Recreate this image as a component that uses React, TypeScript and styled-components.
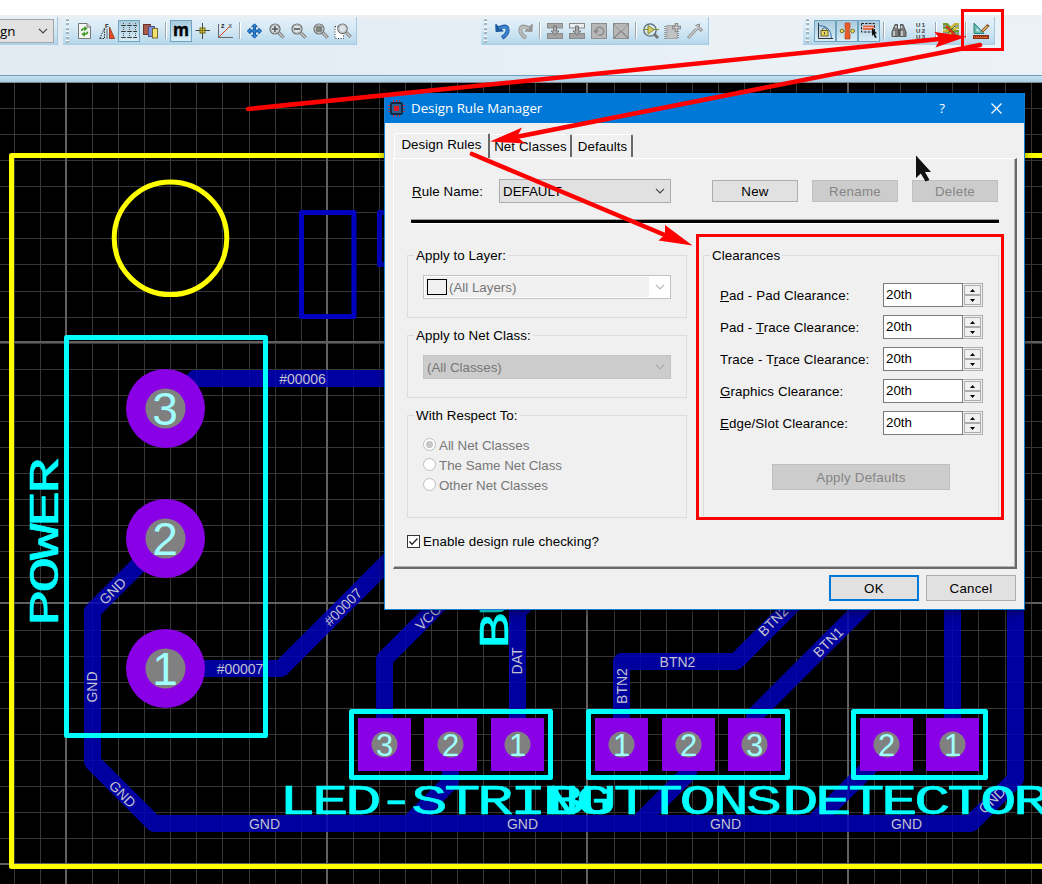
import React from "react";
import styled, { createGlobalStyle, css } from "styled-components";

const UI = '"Liberation Sans", Arial, sans-serif';
const SEGOE = '"Open Sans", "Noto Sans", sans-serif';

const Global = createGlobalStyle`
  *, *::before, *::after { box-sizing: border-box; }
  body { margin: 0; background: #fff; font-family: ${UI}; font-size: 13.33px; color: #000; }
  button, input { font-family: inherit; font-size: inherit; }
`;

/* ---------- application frame ---------- */

const Window = styled.div`
  position: relative;
  width: 1042px;
  height: 884px;
  overflow: hidden;
  display: flex;
  flex-direction: column;
  padding-top: 15px;
`;

const ToolArea = styled.header`
  height: 60px;
  flex: none;
  display: flex;
  align-items: flex-start;
  padding-top: 2px;
  background: linear-gradient(#efefef, #ebf0f4 3px, transparent 4px),
    linear-gradient(90deg, #e2eaf2, #e9f1f7 70%, #eaf2f8);
`;

const CanvasEdge = styled.div`
  height: 8px;
  flex: none;
  background: linear-gradient(#c8e0f0, #a9cfe6);
  border-top: 1px solid #6b9dbd;
  border-bottom: 1px solid #868686;
`;

const Strip = styled.div<{ $w: number; $gap?: number }>`
  width: ${(p) => p.$w}px;
  height: 28px;
  margin-right: ${(p) => p.$gap ?? 0}px;
  flex: none;
  display: flex;
  align-items: center;
  padding-bottom: 1px;
  background: linear-gradient(#e6f1f8, #d7eaf5 40%, #b9daed 90%, #a8cee3);
  border-right: 1px solid #a5c8dc;
`;

const Grip = styled.span`
  width: 3px;
  height: 25px;
  margin: 0 5px 0 3px;
  background: repeating-linear-gradient(#fff 0 1px, #a3b4c0 1px 3px, transparent 3px 4.5px);
`;

const Tool = styled.button<{ $on?: boolean }>`
  width: 22px;
  height: 22px;
  flex: none;
  display: grid;
  place-items: center;
  padding: 0;
  border: 1px solid transparent;
  background: none;
  ${(p) =>
    p.$on &&
    css`
      border: 1px solid #6fa3c0;
      background: linear-gradient(#a9cbdd, #d8ecf7);
    `}
`;

const Divider = styled.span`
  width: 2px;
  height: 17px;
  margin: 0 3px;
  background: linear-gradient(90deg, #a0a8ae 50%, #fff 50%);
`;

const TopCombo = styled.div`
  width: 54px;
  height: 24px;
  display: flex;
  align-items: center;
  justify-content: space-between;
  padding-right: 4px;
  font: 13.4px ${SEGOE};
  background: #e1e1e1;
  border: 1px solid #a5a5a5;
  border-left: 0;
`;

/* ---------- toolbar glyphs ---------- */

const Ico = ({ children }: { children: React.ReactNode }) => (
  <svg width="18" height="18" viewBox="-1 -1 18 18" overflow="visible">{children}</svg>
);

const Chevron = ({ color = "#444" }: { color?: string }) => (
  <svg width="12" height="8" viewBox="0 0 12 8">
    <path d="M2 1.8 L6 5.8 L10 1.8" fill="none" stroke={color} strokeWidth="1.2" />
  </svg>
);

const Lens = ({ children }: { children?: React.ReactNode }) => (
  <>
    <path d="M10 10 L14.6 14.6" stroke="#777" strokeWidth="3.2" />
    <path d="M10 10 L14.4 14.4" stroke="#ccc" strokeWidth="1.4" />
    <circle cx="6" cy="6" r="5" fill="#dce6ea" stroke="#6d6d6d" strokeWidth="1.2" />
    <circle cx="6" cy="6" r="4" fill="none" stroke="#b5b8ba" />
    {children}
  </>
);

const Refresh = () => (
  <Ico>
    <path d="M1.5 .5 H10 L13.5 4 V15.5 H1.5Z" fill="#f4f6f4" stroke="#777" />
    <path d="M10 .5 V4 H13.5" fill="#ddd" stroke="#777" />
    <path d="M4.6 8 Q4.8 5.6 8 5.6 M10.6 8.6 Q10.4 11.2 7 11.2" fill="none" stroke="#3e9a1c" strokeWidth="1.5" />
    <path d="M7.3 3 L10.6 5.6 L7.3 8.2Z M7.8 8.6 L4.4 11.2 L7.8 13.8Z" fill="#3e9a1c" />
  </Ico>
);
const Mirror = () => (
  <Ico>
    <path d="M.8 15.5 L5.5 5 V15.5Z" fill="none" stroke="#333" strokeDasharray="1.5 1" />
    <path d="M10.5 4 L15.5 15.5 H10.5Z" fill="#e8502a" stroke="#8f2a14" strokeWidth=".8" />
    <path d="M8 5.5 V16" stroke="#666" />
    <text x="6" y="4.6" fontFamily="Liberation Sans" fontSize="6" fontWeight="bold" fill="#222">F</text>
  </Ico>
);
const GridIcon = () => (
  <Ico>
    <path d="M2.5 0V16 M8.5 0V16 M14.5 0V16 M0 2.5H16 M0 8.5H16 M0 14.5H16" stroke="#555" strokeDasharray="1 1" />
    <path d="M1 2.5h3M7 2.5h3M13 2.5h3M1 8.5h3M7 8.5h3M13 8.5h3M1 14.5h3M7 14.5h3M13 14.5h3" stroke="#333" />
  </Ico>
);
const Layers = () => (
  <Ico>
    <rect x=".5" y="1.5" width="7" height="10" fill="#a85b48" stroke="#6b3429" />
    <rect x="5.5" y="3.5" width="6" height="10" fill="#8593d8" stroke="#4b538c" />
    <rect x="9.5" y="5.5" width="5" height="9.5" fill="#f1e06a" stroke="#726a2b" />
  </Ico>
);
const Metric = () => (
  <Ico>
    <text x="8" y="13" textAnchor="middle" fontFamily="Open Sans" fontSize="18.4" fontWeight="bold" textLength="16" lengthAdjust="spacingAndGlyphs" stroke="#000" strokeWidth=".4">m</text>
  </Ico>
);
const Origin = () => (
  <Ico>
    <path d="M7.5 0V16 M.5 7.5H15" stroke="#444" />
    <rect x="5" y="5" width="5" height="5" fill="#d5c736" stroke="#6e6716" />
    <path d="M7.5 5V10 M5 7.5H10" stroke="#6e6716" strokeWidth=".8" />
  </Ico>
);
const Axis = () => (
  <Ico>
    <path d="M1.5 1V14.5 H16" fill="none" stroke="#666" />
    <path d="M2 14 L12 4" stroke="#e5391b" />
    <text x="4" y="4.6" fontFamily="Liberation Sans" fontSize="7" fontWeight="bold" fill="#333">z</text>
    <text x="11.5" y="4.6" fontFamily="Liberation Sans" fontSize="7" fill="#333">x</text>
  </Ico>
);
const Move = () => (
  <Ico>
    <path
      d="M7.5 .8 L10.3 3.7 H8.4 V7.1 H11.8 V5.2 L14.7 8 L11.8 10.8 V8.9 H8.4 V12.3 H10.3 L7.5 15.2 L4.7 12.3 H6.6 V8.9 H3.2 V10.8 L.3 8 L3.2 5.2 V7.1 H6.6 V3.7 H4.7Z"
      fill="#2f8de0" stroke="#1456a0"
    />
  </Ico>
);
const ZoomIn = () => <Ico><Lens><path d="M3 6H9 M6 3V9" stroke="#555" strokeWidth="1.6" /></Lens></Ico>;
const ZoomOut = () => <Ico><Lens><path d="M3 6H9" stroke="#555" strokeWidth="1.6" /></Lens></Ico>;
const ZoomAll = () => <Ico><Lens><rect x="3.8" y="3.8" width="4.4" height="4.4" fill="#87917d" stroke="#666" /></Lens></Ico>;
const ZoomArea = () => (
  <Ico>
    <rect x="0" y="3.5" width="8.5" height="12" fill="#fff" stroke="#333" strokeDasharray="1 1.5" />
    <g transform="translate(1.8,0) scale(.95)"><Lens /></g>
  </Ico>
);
const Undo = ({ color, edge }: { color: string; edge: string }) => (
  <>
    <path d="M4.5 5 Q12.6 1 12.6 7.4 Q12.4 11.5 7 14.8" fill="none" stroke={edge} strokeWidth="4" />
    <path d="M.8 1.2 L1 8.5 L8.2 8Z" fill={edge} stroke={edge} />
    <path d="M4 5.6 Q12.4 1.4 12.6 7.4 Q12.2 11.3 7.6 14.2" fill="none" stroke={color} strokeWidth="2.2" />
  </>
);
const Insert = ({ open }: { open?: boolean }) => (
  <Ico>
    <rect x=".5" y=".5" width="15" height="4.5" fill={open ? "#e8eef1" : "#a9a9a9"} stroke="#8a8a8a" />
    <rect x=".5" y="10.5" width="15" height="5" fill="#a3a3a3" stroke="#8a8a8a" />
    <path d="M6.5 3 H9.5 V8 H12 L8 12.3 L4 8 H6.5Z" fill="#a8a8a8" stroke="#777" />
  </Ico>
);
const Rotate = () => (
  <Ico>
    <rect x=".5" y=".5" width="15" height="15" fill="#b7b7b7" stroke="#8e8e8e" />
    <path d="M4.8 8 A4 4 0 1 1 7 11.8" fill="none" stroke="#868686" strokeWidth="1.2" />
    <path d="M2 7.5 H8 L5 11Z" fill="#868686" />
  </Ico>
);
const Remove = () => (
  <Ico>
    <rect x=".5" y=".5" width="15" height="15" fill="#b7b7b7" stroke="#8e8e8e" />
    <path d="M1 1 L15 15 M15 1 L1 15" stroke="#858585" strokeWidth="1.2" />
    <path d="M2 1.5 L8 7.3 L14 1.5" fill="none" stroke="#d5d5d5" />
  </Ico>
);
const Search = () => (
  <Ico>
    <path d="M10.5 10.5 L15 15" stroke="#777" strokeWidth="3" />
    <circle cx="7" cy="7" r="6.2" fill="#d4e8ee" stroke="#576a75" strokeWidth="1.3" />
    <path d="M0 6.5 H5 M11 6.5 H16" stroke="#918b28" />
    <path d="M5 2.5 V11 L11 6.6Z" fill="#d6d163" stroke="#8d872c" />
  </Ico>
);
const Package = () => (
  <Ico>
    <path d="M.5 3V16 M12.8 8V16" stroke="#888" strokeWidth="2.4" strokeDasharray="1 1" />
    <rect x="2" y="2.5" width="10" height="13" fill="#c2c2c2" stroke="#a5a5a5" />
    <path d="M11.5 0V9 M7 4.5H16" stroke="#858585" strokeWidth="3.4" />
    <path d="M11.5 .8V8.2 M7.8 4.5H15.2" stroke="#c8c8c8" strokeWidth="1.4" />
  </Ico>
);
const Hammer = () => (
  <Ico>
    <path d="M1 15 L9.5 6" stroke="#8e8e8e" strokeWidth="3" />
    <path d="M1.5 14.5 L9.5 6" stroke="#cfcfcf" strokeWidth="1.2" />
    <path d="M8.5 2.5 L12.5 1 L12 4 L15.5 6.5 L14 8.5 L10 5.5" fill="#c4c4c4" stroke="#888" />
  </Ico>
);
const Lock = () => (
  <Ico>
    <path d="M1.5 0V15.5 H16" fill="none" stroke="#333" />
    <path d="M1.5 2.5 Q14 2.5 14.5 15" fill="none" stroke="#3a6cad" />
    <path d="M5.5 7.5 V5.8 Q7.5 3.4 9.5 5.8 V7.5" fill="none" stroke="#666" />
    <rect x="4" y="7.5" width="7" height="5.5" fill="#e5d460" stroke="#6f6620" />
    <path d="M7.5 9V11.5" stroke="#555" />
  </Ico>
);
const Necking = () => (
  <Ico>
    <path d="M6 0H11V5L10 8L11 11V16H6V11L7 8L6 5Z" fill="#e95b2b" stroke="#b8431c" strokeWidth=".7" />
    <path d="M1 8H6 M11 8H16" stroke="#444" />
    <circle cx="3" cy="8" r="1.8" fill="#f2e45a" stroke="#777023" />
    <circle cx="13.5" cy="8" r="1.8" fill="#f2e45a" stroke="#777023" />
  </Ico>
);
const Marquee = () => (
  <Ico>
    <rect x=".5" y=".5" width="13" height="8.5" fill="none" stroke="#222" strokeDasharray="2.5 1.2" />
    <rect x="2" y="2.5" width="11" height="4.5" fill="#e4694a" />
    <path d="M2 4.5H13" stroke="#f5b7a5" />
    <path d="M11 5 L16 10.5 L13.8 10.7 L15.8 14.3 L14 15 L12.4 11.5 L11 13Z" fill="#111" />
  </Ico>
);
const Binoculars = () => (
  <Ico>
    <path d="M4 1.5H6.5V5L7.5 7V13.5H1V9Z M12 1.5H9.5V5L8.5 7V13.5H15V9Z" fill="#7c7c7c" stroke="#555" />
    <path d="M3 8 V13 M11 8 V13 M5 3V5 M10.5 3V5" stroke="#d8d8d8" strokeWidth="1.5" />
    <path d="M6.5 7H9.5" stroke="#555" strokeWidth="1.6" />
  </Ico>
);
const Annotate = () => (
  <Ico>
    <g fontFamily="Liberation Sans" fontSize="6" fontWeight="bold" fill="#333">
      <text x="3" y="4.4" textLength="9">U1</text>
      <text x="3" y="10.1" textLength="9">U2</text>
      <text x="3" y="15.8" textLength="9">U3</text>
    </g>
  </Ico>
);
const Netlist = () => (
  <Ico>
    <path d="M0 1H4L11 8H16 M0 5H3L10 12H16" fill="none" stroke="#6c9b29" strokeWidth="2" />
    <path d="M16 1H12L4 8H0 M16 5H13L5 12H0" fill="none" stroke="#c9b32a" strokeWidth="2" />
    <path d="M0 3H4L12 10H16 M16 3H12L5 10H0" fill="none" stroke="#2f4c14" strokeWidth=".9" />
    <path d="M3 3L14 14" stroke="#d52f1c" strokeWidth="2" />
  </Ico>
);
const Rules = () => (
  <Ico>
    <path d="M1 0V10.5H11Z" fill="#62bcb0" stroke="#33827a" />
    <path d="M3.5 5V8.3H7Z" fill="#dceff4" />
    <path d="M9 8.5L15.5 2" stroke="#7b4419" strokeWidth="3" />
    <path d="M9.5 8L14.5 3" stroke="#e8bb6d" strokeWidth="1.4" />
    <rect x=".5" y="12.5" width="15" height="3" fill="#dd5a2d" stroke="#8c3013" />
    <path d="M2 13.5H15" stroke="#6d2813" strokeDasharray="1 1" />
  </Ico>
);

/* ---------- board drawing ---------- */

const Canvas = styled.svg`
  display: block;
  flex: none;
  background: #000;
`;

const range = (n: number) => Array.from({ length: n }, (_, i) => i);

const netLabels: [string, number, number, number][] = [
  ["#00006", 302.5, 379, 0],
  ["#00007", 240, 669, 0],
  ["#00007", 343, 607, -45],
  ["GND", 112.5, 591, -45],
  ["GND", 92, 687, -90],
  ["GND", 122.5, 794, 45],
  ["GND", 264.5, 824, 0],
  ["GND", 522.5, 824, 0],
  ["GND", 725.5, 824, 0],
  ["GND", 906.5, 824, 0],
  ["GND", 992, 800, -45],
  ["VCC/", 429.5, 616, -45],
  ["DAT", 517, 661, -90],
  ["BTN2", 621.5, 686, -90],
  ["BTN2", 677.5, 662, 0],
  ["BTN2", 773, 621, -45],
  ["BTN1", 828, 642, -45],
];

const tracks = [
  "165,408.5 195,378.5 420,378.5",
  "165,538.5 92.5,611 92.5,762 154,823.5 971,823.5 1015.5,779 1015.5,590",
  "165,668.5 281,668.5 400,549.5",
  "384.5,745 384.5,659 450,593.5",
  "517.5,745 517.5,600",
  "517.5,612 545,584.5",
  "621.5,745 621.5,661.5 736,661.5 805,592.5",
  "754.5,745 754.5,715.5 880,590",
  "952.5,745 952.5,590",
  "450.5,745 450.5,782 409,823.5",
  "688.5,745 688.5,773 638,823.5",
  "886.5,745 886.5,750 813,823.5",
];

const squarePads: [number, string][] = [
  [384.5, "3"], [450.5, "2"], [517.5, "1"],
  [621.5, "1"], [688.5, "2"], [754.5, "3"],
  [886.5, "2"], [952.5, "1"],
];

const Silk = ({ x, y, r = 0, children }: { x: number; y: number; r?: number; children: string }) => (
  <text
    transform={`translate(${x},${y}) rotate(${r}) scale(1.45,1)`}
    fontFamily="Liberation Mono" fontSize="42" letterSpacing="-2.45"
    fill="#0ff" stroke="#0ff" strokeWidth=".7" strokeLinejoin="round" vectorEffect="non-scaling-stroke"
  >
    {children}
  </text>
);

const Board = () => (
  <Canvas width="1042" height="801" viewBox="0 83 1042 801">
    <g stroke="#373737" shapeRendering="crispEdges">
      {range(40).map((i) => <path key={i} d={`M${Math.round(13.9 + i * 26.07) + 0.5} 83V884`} />)}
      {range(31).map((i) => <path key={i} d={`M0 ${Math.round(81.9 + i * 26.08) + 0.5}H1042`} />)}
    </g>
    <g stroke="#606060" strokeWidth="2" shapeRendering="crispEdges">
      {[66, 327, 587, 848].map((x) => <path key={x} d={`M${x} 83V884`} />)}
      {[342, 603, 864].map((y) => <path key={y} d={`M0 ${y}H1042`} />)}
    </g>
    <g fill="none" stroke="#0000c0" strokeWidth="5" strokeLinejoin="round">
      <rect x="301.5" y="212.5" width="52.5" height="104" />
      <rect x="379.5" y="212.5" width="52" height="52" />
    </g>
    <g opacity=".83" fill="none" stroke="#0000c0" strokeWidth="17" strokeLinejoin="round">
      {tracks.map((t) => <polyline key={t} points={t} />)}
    </g>
    <g fontFamily="Liberation Sans" fontSize="14" fill="#c2c2d0" textAnchor="middle">
      {netLabels.map(([t, x, y, r]) => (
        <text key={`${t}${x}`} transform={`translate(${x},${y}) rotate(${r})`} y="5">{t}</text>
      ))}
      <text x="956" y="608">/</text>
    </g>
    <g fill="none" stroke="#ff0" strokeWidth="5" strokeLinejoin="round">
      <path d="M1050 155.5H11.5V866.5H1050" />
      <circle cx="170.5" cy="238.3" r="56.3" />
    </g>
    <g textAnchor="middle" fontFamily="Liberation Sans" fill="#a0ffff">
      {[["3", 408.5], ["2", 538.5], ["1", 668.5]].map(([n, y]) => (
        <g key={n}>
          <circle cx="165.5" cy={y} r="39.5" fill="#8a00e6" />
          <circle cx="165.5" cy={y} r="20" fill="#808080" />
          <text x="165" y={Number(y) + 16} fontSize="46">{n}</text>
        </g>
      ))}
      {squarePads.map(([x, n]) => (
        <g key={x}>
          <rect x={x - 26.5} y="718" width="53" height="53" fill="#8a00e6" />
          <circle cx={x} cy="744.5" r="13" fill="#808080" />
          <text x={x} y="755.5" fontSize="31">{n}</text>
        </g>
      ))}
    </g>
    <g fill="none" stroke="#0ff" strokeWidth="5" strokeLinejoin="round">
      <rect x="66.5" y="337.5" width="199" height="398" />
      <rect x="351.5" y="711.5" width="199" height="66" />
      <rect x="588.5" y="711.5" width="199" height="66" />
      <rect x="853.5" y="711.5" width="132" height="66" />
    </g>
    <Silk x={57.5} y={626} r={-90}>POWER</Silk>
    <Silk x={508} y={649} r={-90}>BU</Silk>
    <Silk x={279} y={813.5}>LED-STRING</Silk>
    <Silk x={547.5} y={813.5}>BUTTONS</Silk>
    <Silk x={782} y={813.5}>DETECTOR</Silk>
  </Canvas>
);

/* ---------- dialog ---------- */

const Dialog = styled.section`
  position: absolute;
  left: 384px;
  top: 93px;
  width: 641px;
  height: 517px;
  display: flex;
  flex-direction: column;
  background: #f0f0f0;
  border: 1px solid #1a80d0;
  border-top: 0;
  box-shadow: 0 2px 9px rgba(0, 0, 0, 0.45);
`;

const TitleBar = styled.div`
  height: 30px;
  flex: none;
  display: flex;
  align-items: center;
  padding: 0 21px 0 3px;
  color: #fff;
  background: #0078d7;
  font: 13.3px ${SEGOE};
`;

const TitleText = styled.span`
  margin-left: 6px;
  flex: 1;
`;

const Help = styled.span`
  margin-right: 45px;
`;

const Tabs = styled.div`
  height: 35px;
  flex: none;
  display: flex;
  align-items: flex-end;
  padding-left: 9px;
`;

const Tab = styled.div<{ $w: number; $active?: boolean }>`
  width: ${(p) => p.$w}px;
  height: ${(p) => (p.$active ? 26 : 23)}px;
  padding-top: ${(p) => (p.$active ? 3 : 4)}px;
  text-align: center;
  letter-spacing: 0.08px;
  line-height: 16px;
  white-space: nowrap;
  border-top: 1px solid #fff;
  border-left: 1px solid ${(p) => (p.$active ? "#fff" : "transparent")};
  border-right: 2px solid #696969;
  border-radius: 2px 2px 0 0;
  margin-bottom: ${(p) => (p.$active ? -1 : 1)}px;
  margin-right: ${(p) => (p.$active ? 0 : 1)}px;
  background: #f0f0f0;
`;

const Panel = styled.div`
  height: 411px;
  flex: none;
  margin: 0 7px 0 8px;
  padding: 20px 17px 0 13px;
  border: 1px solid #fff;
  border-right: 2px solid #696969;
  border-bottom: 2px solid #696969;
  box-shadow: inset -1px -1px #b5b5b5;
`;

const RuleRow = styled.div`
  display: flex;
  align-items: center;
  height: 24px;
  padding-left: 5px;
`;

const RuleLabel = styled.span`
  width: 87px;
  letter-spacing: 0.07px;
`;

const Spacer = styled.span`
  flex: 1;
`;

const Combo = styled.div<{ $kind?: "off" | "layer" }>`
  width: ${(p) => (p.$kind ? 248 : 172)}px;
  height: 24px;
  display: flex;
  align-items: center;
  justify-content: space-between;
  padding: 0 4px 0 3px;
  color: ${(p) => (p.$kind ? "#777" : "#000")};
  background: ${(p) => (p.$kind === "off" ? "#ccc" : p.$kind ? "linear-gradient(90deg, #f0f0f0 225px, #fff 225px)" : "#e1e1e1")};
  border: 1px solid ${(p) => (p.$kind ? "#c3c3c3" : "#adadad")};
  ${(p) => p.$kind === "layer" && "box-shadow: inset 0 0 0 1px #fff;"}
`;

const LayerName = styled.span`
  display: flex;
  align-items: center;
  gap: 2px;
`;

const Swatch = styled.span`
  width: 20px;
  height: 16px;
  border: 1px solid #000;
`;

const Button = styled.button<{ $w: number; $h?: number; $primary?: boolean }>`
  width: ${(p) => p.$w}px;
  height: ${(p) => p.$h ?? 22}px;
  padding: 0;
  letter-spacing: 0.25px;
  color: #000;
  background: #e1e1e1;
  border: ${(p) => (p.$primary ? "2px solid #0078d7" : "1px solid #adadad")};
  &:disabled {
    color: #858585;
    background: #ccc;
    border-color: #bfbfbf;
  }
`;

const ButtonRow = styled.div`
  display: flex;
  gap: 14px;
`;

const Rule = styled.hr`
  width: 588px;
  height: 5px;
  margin: 16px 0 0 4px;
  background: #000;
  border: 0;
  border-top: 1px solid #a0a0a0;
  border-bottom: 1px solid #fff;
`;

const Columns = styled.div`
  display: flex;
  justify-content: space-between;
  margin: 31px 0 0 0;
  width: 592px;
`;

const Column = styled.div`
  display: flex;
  flex-direction: column;
  gap: 17px;
`;

const Group = styled.div<{ $w: number; $h: number }>`
  width: ${(p) => p.$w}px;
  height: ${(p) => p.$h}px;
  padding: 0 15px;
  border: 1px solid #dcdcdc;
`;

const Legend = styled.div<{ $gap?: number }>`
  width: fit-content;
  height: 16px;
  line-height: 16px;
  margin: -8px 0 ${(p) => p.$gap ?? 11}px -9px;
  padding: 0 2px;
  letter-spacing: 0.07px;
  background: #f0f0f0;
`;

const Radio = styled.label`
  height: 20px;
  display: flex;
  align-items: center;
  gap: 3px;
  color: #777;
`;

const Dot = styled.span<{ $on?: boolean }>`
  width: 13px;
  height: 13px;
  margin-top: -1px;
  border: 1px solid #bdbdbd;
  border-radius: 50%;
  background: ${(p) => (p.$on ? "radial-gradient(circle, #c6c6c6 3.3px, #fff 4px)" : "#fff")};
`;

const Clearance = styled.div`
  height: 24px;
  margin-bottom: 8px;
  display: flex;
  align-items: center;
  margin-left: 1px;
`;

const ClearanceLabel = styled.span`
  width: 163px;
  letter-spacing: 0.1px;
`;

const Value = styled.span`
  width: 80px;
  height: 24px;
  padding-left: 2px;
  line-height: 21px;
  background: #fff;
  border: 1px solid #7a7a7a;
`;

const Spinner = styled.span`
  width: 20px;
  height: 24px;
  display: flex;
  flex-direction: column;
  padding: 1px;
  border: 1px solid #adadad;
  border-left: 0;
  background: #f0f0f0;
`;

const SpinHalf = styled.span`
  flex: 1;
  display: grid;
  place-items: center;
  border: 1px solid #adadad;
`;

const ApplyRow = styled.div`
  margin: 29px 0 0 53px;
`;

const CheckRow = styled.label`
  display: flex;
  align-items: center;
  gap: 3px;
  height: 16px;
  margin-top: 15px;
  letter-spacing: 0.07px;
`;

const Footer = styled.div`
  display: flex;
  justify-content: flex-end;
  gap: 7px;
  padding: 6px 8px 0 0;
`;

const Overlay = styled.svg`
  position: absolute;
  left: 0;
  top: 0;
  pointer-events: none;
`;

const SpinButtons = () => (
  <Spinner>
    <SpinHalf><svg width="5" height="3"><path d="M0 3L2.5 0L5 3Z" /></svg></SpinHalf>
    <SpinHalf><svg width="5" height="3"><path d="M0 0L2.5 3L5 0Z" /></svg></SpinHalf>
  </Spinner>
);

const clearances: [string, string, string][] = [
  ["", "P", "ad - Pad Clearance:"],
  ["Pad - ", "T", "race Clearance:"],
  ["Trace - T", "r", "ace Clearance:"],
  ["", "G", "raphics Clearance:"],
  ["", "E", "dge/Slot Clearance:"],
];

const RuleDialog = () => (
  <Dialog>
    <TitleBar>
      <svg width="17" height="17" viewBox="0 0 17 17">
        <path d="M5.5 0V17M8.5 0V17M11.5 0V17M0 5.5H17M0 8.5H17M0 11.5H17" stroke="#b52b43" />
        <rect x="3" y="3" width="11" height="11" rx="1" fill="#2a5f90" stroke="#17273b" strokeWidth="1.8" />
        <rect x="6" y="6" width="5" height="5" fill="#e01b28" />
      </svg>
      <TitleText>Design Rule Manager</TitleText>
      <Help>?</Help>
      <svg width="13" height="13" viewBox="0 0 13 13"><path d="M1.5 1.5L11.5 11.5M11.5 1.5L1.5 11.5" stroke="#fff" strokeWidth="1.2" /></svg>
    </TitleBar>
    <Tabs>
      <Tab $w={96} $active>Design Rules</Tab>
      <Tab $w={82}>Net Classes</Tab>
      <Tab $w={60}>Defaults</Tab>
    </Tabs>
    <Panel>
      <RuleRow>
        <RuleLabel><u>R</u>ule Name:</RuleLabel>
        <Combo>DEFAULT<Chevron /></Combo>
        <Spacer />
        <ButtonRow>
          <Button $w={86}>New</Button>
          <Button $w={86} disabled>Rename</Button>
          <Button $w={86} disabled>Delete</Button>
        </ButtonRow>
      </RuleRow>
      <Rule />
      <Columns>
        <Column>
          <Group $w={280} $h={63}>
            <Legend>Apply to Layer:</Legend>
            <Combo $kind="layer"><LayerName><Swatch />(All Layers)</LayerName><Chevron color="#b5b5b5" /></Combo>
          </Group>
          <Group $w={280} $h={63}>
            <Legend>Apply to Net Class:</Legend>
            <Combo $kind="off">(All Classes)<Chevron color="#aaa" /></Combo>
          </Group>
          <Group $w={280} $h={103}>
            <Legend>With Respect To:</Legend>
            <Radio><Dot $on />All Net Classes</Radio>
            <Radio><Dot />The Same Net Class</Radio>
            <Radio><Dot />Other Net Classes</Radio>
          </Group>
        </Column>
        <Group $w={296} $h={263}>
          <Legend $gap={19}>Clearances</Legend>
          {clearances.map(([a, u, b]) => (
            <Clearance key={a + u + b}>
              <ClearanceLabel>{a}<u>{u}</u>{b}</ClearanceLabel>
              <Value>20th</Value>
              <SpinButtons />
            </Clearance>
          ))}
          <ApplyRow><Button $w={178} $h={26} disabled>Apply Defaults</Button></ApplyRow>
        </Group>
      </Columns>
      <CheckRow>
        <svg width="13" height="13" viewBox="0 0 13 13">
          <rect x=".5" y=".5" width="12" height="12" fill="#fff" stroke="#333" />
          <path d="M2.5 6.5L5 9.3L10.5 3.5" fill="none" stroke="#222" strokeWidth="1.3" />
        </svg>
        Enable design rule checking?
      </CheckRow>
    </Panel>
    <Footer>
      <Button $w={90} $h={26} $primary>OK</Button>
      <Button $w={90} $h={26}>Cancel</Button>
    </Footer>
  </Dialog>
);

const Annotations = () => (
  <Overlay width="1042" height="884">
    <path d="M916 155.5V178L920.8 173.5L925.5 181.5L929.5 180L925 172H931Z" fill="#111" />
    <g fill="none" stroke="#f00" strokeWidth="3">
      <rect x="962.5" y="10.5" width="40" height="39" />
      <rect x="697.5" y="235.5" width="305" height="283" />
    </g>
    <g stroke="#f00" strokeWidth="4.6" strokeLinecap="round">
      <path d="M248 109L942 38.8" />
      <path d="M980 45L516 137" />
      <path d="M472 154L666 235.5" />
    </g>
    <g fill="#f00">
      <path d="M967 36.5L934.5 32L940 39L935.5 47.5Z" />
      <path d="M490 141.5L522 127.5L517 137L525.5 143.5Z" />
      <path d="M692.5 245.5L665 225L665 234.5L658.5 240.5Z" />
    </g>
  </Overlay>
);

export default function App() {
  return (
    <>
      <Global />
      <Window>
        <ToolArea>
          <Strip $w={58} $gap={5}><TopCombo>gn<Chevron /></TopCombo></Strip>
          <Strip $w={294} $gap={124}>
            <Grip />
            <Tool><Refresh /></Tool>
            <Tool><Mirror /></Tool>
            <Tool $on><GridIcon /></Tool>
            <Tool><Layers /></Tool>
            <Divider />
            <Tool $on><Metric /></Tool>
            <Tool><Origin /></Tool>
            <Tool><Axis /></Tool>
            <Divider />
            <Tool><Move /></Tool>
            <Tool><ZoomIn /></Tool>
            <Tool><ZoomOut /></Tool>
            <Tool><ZoomAll /></Tool>
            <Tool><ZoomArea /></Tool>
          </Strip>
          <Strip $w={228} $gap={94}>
            <Grip />
            <Tool><Ico><Undo color="#3d86cf" edge="#1d5b9e" /></Ico></Tool>
            <Tool><Ico><g transform="translate(16,0) scale(-1,1)"><Undo color="#bdbdbd" edge="#959595" /></g></Ico></Tool>
            <Divider />
            <Tool><Insert /></Tool>
            <Tool><Insert open /></Tool>
            <Tool><Rotate /></Tool>
            <Tool><Remove /></Tool>
            <Divider />
            <Tool><Search /></Tool>
            <Tool><Package /></Tool>
            <Tool><Hammer /></Tool>
          </Strip>
          <Strip $w={192}>
            <Grip />
            <Tool $on><Lock /></Tool>
            <Tool $on><Necking /></Tool>
            <Tool $on><Marquee /></Tool>
            <Divider />
            <Tool><Binoculars /></Tool>
            <Tool><Annotate /></Tool>
            <Divider />
            <Tool><Netlist /></Tool>
            <Divider />
            <Tool><Rules /></Tool>
          </Strip>
        </ToolArea>
        <CanvasEdge />
        <Board />
        <RuleDialog />
        <Annotations />
      </Window>
    </>
  );
}
